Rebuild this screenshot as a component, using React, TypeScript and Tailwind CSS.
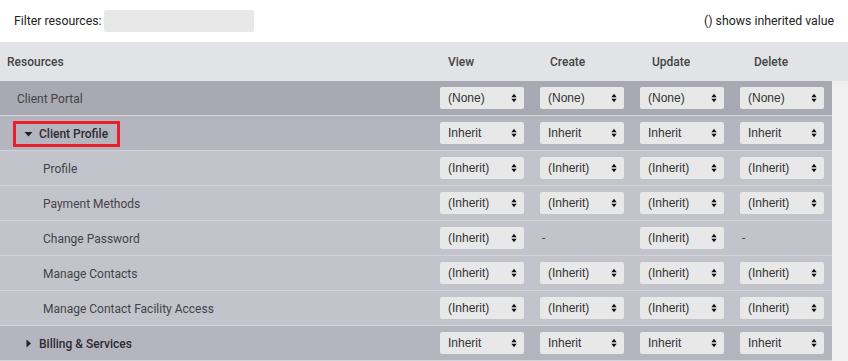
type Row = {
  name: string;
  kind: "top" | "group" | "child";
  open?: boolean;
  highlight?: boolean;
  values: (string | null)[];
};

const rows: Row[] = [
  { name: "Client Portal", kind: "top", values: ["(None)", "(None)", "(None)", "(None)"] },
  { name: "Client Profile", kind: "group", open: true, highlight: true, values: ["Inherit", "Inherit", "Inherit", "Inherit"] },
  { name: "Profile", kind: "child", values: ["(Inherit)", "(Inherit)", "(Inherit)", "(Inherit)"] },
  { name: "Payment Methods", kind: "child", values: ["(Inherit)", "(Inherit)", "(Inherit)", "(Inherit)"] },
  { name: "Change Password", kind: "child", values: ["(Inherit)", null, "(Inherit)", null] },
  { name: "Manage Contacts", kind: "child", values: ["(Inherit)", "(Inherit)", "(Inherit)", "(Inherit)"] },
  { name: "Manage Contact Facility Access", kind: "child", values: ["(Inherit)", "(Inherit)", "(Inherit)", "(Inherit)"] },
  { name: "Billing & Services", kind: "group", open: false, values: ["Inherit", "Inherit", "Inherit", "Inherit"] },
];

function Arrows() {
  return (
    <svg width="6" height="10" viewBox="0 0 6 10" className="shrink-0">
      <path d="M3 0.8 L5.6 4.2 L0.4 4.2 Z" fill="#111" />
      <path d="M3 9.2 L5.6 5.8 L0.4 5.8 Z" fill="#111" />
    </svg>
  );
}

function Select({ value }: { value: string }) {
  return (
    <div
      className="w-[84px] h-[22px] bg-[#e8e8e8] rounded-[2px] flex items-center justify-between pl-[8px] pr-[7px] text-[#333]"
      style={{ fontFamily: "'Liberation Sans', Arial, sans-serif" }}
    >
      <span>{value}</span>
      <Arrows />
    </div>
  );
}

const rowBg = {
  top: "bg-[#a9a9b3]",
  group: "bg-[#b5b5bf]",
  child: "bg-[#c3c3cc]",
};

export default function App() {
  return (
    <div className="w-[848px] h-[361px] bg-white text-[12px] overflow-hidden" style={{ fontFamily: "Roboto, 'Liberation Sans', sans-serif" }}>
      {/* filter bar */}
      <div className="h-[42px] flex items-center justify-between pl-[14px] pr-[14px] text-[#222]">
        <div className="flex items-center gap-[2px]">
          <span className="text-[12.3px]">Filter resources:</span>
          <div className="w-[150px] h-[22px] bg-[#e8e8e8] rounded-[2px]" />
        </div>
        <span className="text-[12.3px]">() shows inherited value</span>
      </div>

      {/* header */}
      <div className="h-[39px] bg-[#e2e3e7] flex items-center font-medium text-[#444]">
        <div className="w-[432px] pl-[7px]">Resources</div>
        <div className="w-[100px] pl-[16px]">View</div>
        <div className="w-[100px] pl-[18px]">Create</div>
        <div className="w-[100px] pl-[20px]">Update</div>
        <div className="w-[100px] pl-[22px]">Delete</div>
      </div>

      {/* body */}
      <div className="flex">
        <div className="w-[832px]">
          {rows.map((r) => (
            <div key={r.name} className={`h-[35px] flex items-center border-b border-[#d3d3da] ${rowBg[r.kind]}`}>
              <div className="w-[432px] flex items-center pt-[1px]">
                {r.kind === "top" && <span className="pl-[17px] text-[#444]">{r.name}</span>}
                {r.kind === "child" && <span className="pl-[43px] text-[#444]">{r.name}</span>}
                {r.kind === "group" && (
                  <div className={`ml-[13px] h-[26px] flex items-center gap-[6px] pl-[8px] pr-[9px] font-medium text-[#2b2b33] border-[3px] ${r.highlight ? "border-[#e8202a]" : "border-transparent"}`}>
                    {r.open ? (
                      <svg width="9" height="6" viewBox="0 0 9 6"><path d="M0.5 1 L8.5 1 L4.5 5.5 Z" fill="#222" /></svg>
                    ) : (
                      <svg width="9" height="9" viewBox="0 0 9 9"><path d="M2.5 0.5 L7 4.5 L2.5 8.5 Z" fill="#222" /></svg>
                    )}
                    <span>{r.name}</span>
                  </div>
                )}
              </div>
              {r.values.map((v, i) => (
                <div key={i} className="w-[100px] pl-[8px] flex items-center">
                  {v ? <Select value={v} /> : <span className="pl-[2px] text-[#444]">-</span>}
                </div>
              ))}
            </div>
          ))}
        </div>
        <div className="flex-1 bg-[#f0f0f0]" />
      </div>
    </div>
  );
}
